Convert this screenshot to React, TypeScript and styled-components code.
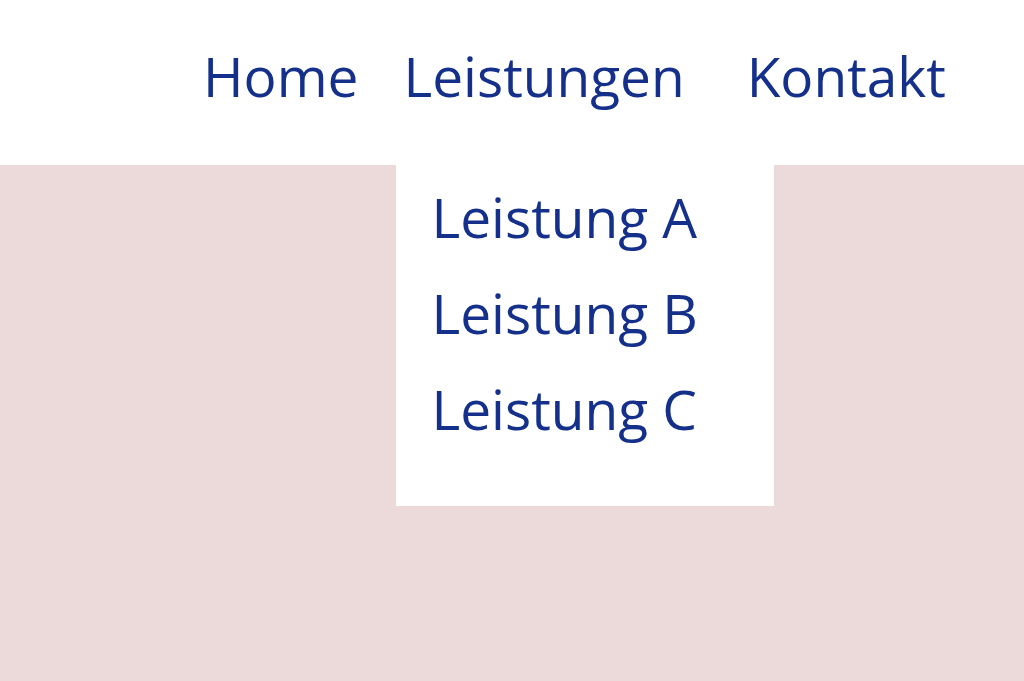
import React from 'react';
import styled, { createGlobalStyle } from 'styled-components';

const ink = '#14308a';

const GlobalStyle = createGlobalStyle`
	html, body {
		margin: 0;
		padding: 0;
		background: #ecd9d9;
	}

	body {
		font-family: 'Open Sans', 'Noto Sans', sans-serif;
		color: ${ink};
	}
`;

const services = ['Leistung A', 'Leistung B', 'Leistung C'];

const App: React.FC = () => (
	<>
		<GlobalStyle />
		<Page>
			<Header>
				<NavList>
					<NavItem $gap={45}><NavLink href="#">{'Home'}</NavLink></NavItem>
					<NavItem $gap={62}>
						<NavLink href="#">{'Leistungen'}</NavLink>
						<Dropdown>
							{services.map(s => (
								<DropdownItem key={s}><NavLink href="#">{s}</NavLink></DropdownItem>
							))}
						</Dropdown>
					</NavItem>
					<NavItem $gap={0}><NavLink href="#">{'Kontakt'}</NavLink></NavItem>
				</NavList>
			</Header>
		</Page>
	</>
);

const Page = styled.div`
	width: 100%;
	min-height: 681px;
	background: #ecd9d9;
`;

const Header = styled.header`
	height: 165px;
	background: #ffffff;
	box-sizing: border-box;
	padding: 38px 0 0 203px;
`;

const NavList = styled.ul`
	display: flex;
	margin: 0;
	padding: 0;
	list-style: none;
`;

const NavItem = styled.li<{ $gap: number }>`
	position: relative;
	margin-right: ${p => p.$gap}px;
	font-size: 55px;
	line-height: 76px;
`;

const NavLink = styled.a`
	color: ${ink};
	text-decoration: none;
	white-space: nowrap;
`;

// sub menu hangs under "Leistungen" and reaches from the header edge down
const Dropdown = styled.ul`
	position: absolute;
	top: 127px;
	left: -7px;
	width: 378px;
	box-sizing: border-box;
	margin: 0;
	padding: 4px 0 49px 35px;
	list-style: none;
	background: #ffffff;
`;

const DropdownItem = styled.li`
	font-size: 55px;
	line-height: 96px;
`;

export default App;
